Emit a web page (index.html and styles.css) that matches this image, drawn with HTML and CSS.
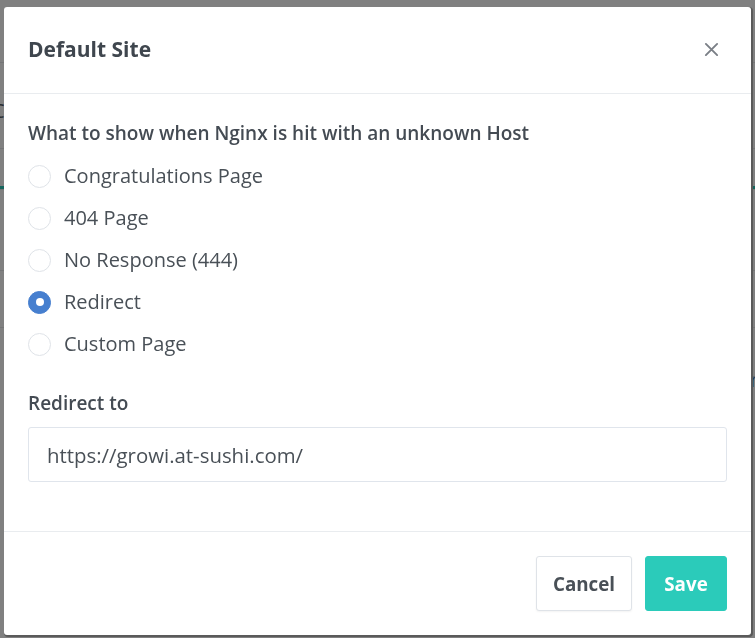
FILE: index.html
```html
<!DOCTYPE html>
<html lang="en">
<head>
<meta charset="utf-8">
<title>Default Site</title>
<link rel="stylesheet" href="styles.css">
</head>
<body>
<div class="page">
  <div class="bg-row bg-r1"><span class="bg-letter">C</span></div>
  <div class="bg-row bg-r2"></div>
  <div class="bg-green"></div>
  <div class="bg-row bg-r3"></div>
  <div class="bg-row bg-r4"></div>
  <div class="bg-row bg-r5"><span class="bg-letter">r</span></div>
</div>

<div class="modal">
  <div class="modal-header">
    <h5 class="modal-title">Default Site</h5>
    <button class="close" type="button" aria-label="Close">
      <svg width="16" height="16" viewBox="0 0 16 16" aria-hidden="true">
        <path d="M2 2 L14 14 M14 2 L2 14" stroke="#7a7f86" stroke-width="2" stroke-linecap="round" fill="none"/>
      </svg>
    </button>
  </div>
  <div class="modal-body">
    <div class="form-group">
      <div class="form-label">What to show when Nginx is hit with an unknown Host</div>
      <label class="radio"><span class="radio-dot"></span><span class="radio-text">Congratulations Page</span></label>
      <label class="radio"><span class="radio-dot"></span><span class="radio-text">404 Page</span></label>
      <label class="radio"><span class="radio-dot"></span><span class="radio-text">No Response (444)</span></label>
      <label class="radio"><span class="radio-dot checked"></span><span class="radio-text">Redirect</span></label>
      <label class="radio"><span class="radio-dot"></span><span class="radio-text">Custom Page</span></label>
    </div>
    <div class="form-group second">
      <div class="form-label">Redirect to</div>
      <div class="input">https://growi.at-sushi.com/</div>
    </div>
  </div>
  <div class="modal-footer">
    <button class="btn btn-cancel" type="button">Cancel</button>
    <button class="btn btn-save" type="button">Save</button>
  </div>
</div>
</body>
</html>
```
FILE: styles.css
```css
html, body {
  margin: 0;
  padding: 0;
}
body {
  background: #808080;
  font-family: "Open Sans", "Liberation Sans", sans-serif;
  color: #495057;
  width: 755px;
  height: 638px;
  overflow: hidden;
}
.page {
  padding-top: 62px;
}
.bg-row {
  border-top: 1px solid #747576;
  position: relative;
}
.bg-r1 { height: 85px; }
.bg-r2 { height: 37px; }
.bg-green { height: 3px; background: #15655d; }
.bg-r3 { height: 80px; }
.bg-r4 { height: 56px; }
.bg-r5 { height: 60px; }
.bg-letter {
  display: block;
  margin-left: -8px;
  font-size: 20px;
  line-height: 24px;
  color: #2a2d31;
  padding-top: 36px;
}
.bg-r5 .bg-letter {
  margin-left: 750px;
  padding-top: 40px;
  color: #233c5c;
}

.modal {
  position: fixed;
  top: 7px;
  left: 4px;
  width: 747px;
  height: 628px;
  background: #fff;
  border-radius: 3px;
  box-shadow: 1px 1px 0 1px #5a5a5a;
  display: flex;
  flex-direction: column;
  box-sizing: border-box;
}
.modal-header {
  height: 87px;
  flex: none;
  box-sizing: border-box;
  border-bottom: 1px solid #e9ecef;
  display: flex;
  align-items: center;
  justify-content: space-between;
  padding: 0 32px 2px 24px;
}
.modal-title {
  margin: 0;
  font-size: 21px;
  font-weight: 700;
  color: #3f464e;
}
.close {
  border: 0;
  background: transparent;
  padding: 0;
  width: 15px;
  height: 15px;
  display: flex;
  cursor: pointer;
}
.close svg {
  width: 15px;
  height: 15px;
}
.modal-body {
  padding: 26px 24px 0 24px;
  height: 438px;
  flex: none;
  box-sizing: border-box;
  border-bottom: 1px solid #e9ecef;
}
.form-label {
  font-size: 19px;
  font-weight: 600;
  line-height: 26px;
  color: #444b53;
  margin-bottom: 9px;
}
.radio {
  display: flex;
  align-items: center;
  height: 42px;
}
.radio-dot {
  width: 23px;
  height: 23px;
  border: 1px solid #dfe3e8;
  border-radius: 50%;
  box-sizing: border-box;
  margin-right: 13px;
  flex: none;
  background: #fff;
}
.radio-dot.checked {
  background: #467fcf;
  border-color: #467fcf;
  display: flex;
  align-items: center;
  justify-content: center;
}
.radio-dot.checked::after {
  content: "";
  width: 8px;
  height: 8px;
  background: #fff;
  border-radius: 50%;
}
.radio-text {
  font-size: 20px;
  line-height: 26px;
  color: #495057;
}
.second {
  margin-top: 25px;
}
.second .form-label {
  margin-bottom: 11px;
}
.input {
  height: 55px;
  box-sizing: border-box;
  border: 1px solid #e0e5ec;
  border-radius: 3px;
  padding: 0 18px;
  display: flex;
  align-items: center;
  font-size: 20.4px;
  color: #495057;
}
.modal-footer {
  flex: 1;
  display: flex;
  align-items: center;
  justify-content: flex-end;
  padding: 0 24px;
  gap: 13px;
}
.btn {
  height: 55px;
  border-radius: 3px;
  font-family: "Open Sans", "Liberation Sans", sans-serif;
  font-size: 18.8px;
  font-weight: 700;
  box-sizing: border-box;
  cursor: pointer;
  padding: 0;
}
.btn-cancel {
  width: 96px;
  background: #fff;
  border: 1px solid #dfe3e8;
  color: #495057;
  box-shadow: 0 1px 2px rgba(0,0,0,0.05);
}
.btn-save {
  width: 82px;
  background: #2bcbba;
  border: 1px solid #2bcbba;
  color: #fff;
}
```
